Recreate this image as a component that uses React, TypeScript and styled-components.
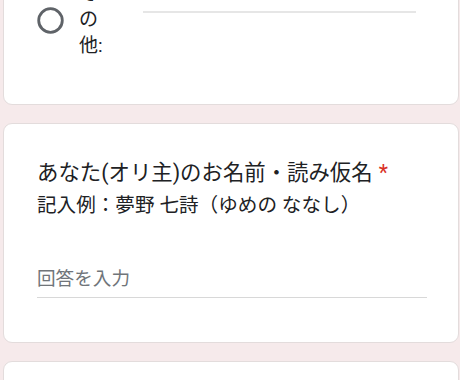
import styled, { createGlobalStyle } from 'styled-components';

const GlobalStyle = createGlobalStyle`
  html, body {
    margin: 0;
    padding: 0;
    background: #f6eaeb;
    overflow: hidden;
  }
  body {
    font-family: Roboto, "Noto Sans CJK JP", sans-serif;
    color: #202124;
  }
`;

const FormPage = styled.main`
  display: flex;
  flex-direction: column;
  gap: 18px;
  padding: 0 1px 0 3px;
  margin-top: -60px;
`;

const Card = styled.section<{ $padTop: number; $padBottom: number; $minHeight?: number }>`
  background: #ffffff;
  border: 1px solid #e3dcdc;
  border-radius: 9px;
  padding: ${(p) => p.$padTop}px 31px ${(p) => p.$padBottom}px 33px;
  min-height: ${(p) => (p.$minHeight ? `${p.$minHeight}px` : 'auto')};
  box-sizing: border-box;
`;

const OptionRow = styled.div`
  display: flex;
  align-items: flex-start;
`;

const RadioBox = styled.div`
  width: 27px;
  height: 27px;
  margin-top: 26px;
  flex-shrink: 0;
`;

const OptionLabel = styled.span`
  width: 27px;
  margin-left: 15px;
  font-size: 19px;
  line-height: 26px;
  color: #202124;
`;

const OtherInput = styled.div`
  flex: 1;
  height: 30px;
  margin: 0 11px 0 37px;
  border-bottom: 2px solid #e6e6e6;
`;

const Question = styled.h2`
  margin: 0;
  font-size: 21.4px;
  font-weight: 400;
  line-height: 30px;
  color: #202124;
`;

const Required = styled.span`
  color: #d93025;
  padding-left: 6px;
`;

const Hint = styled.p`
  margin: 4px 0 0;
  font-size: 19.6px;
  line-height: 28px;
  color: #202124;
`;

const AnswerField = styled.div`
  margin-top: 47px;
  padding-bottom: 6px;
  border-bottom: 1px solid #d8d8d8;
  font-size: 18.6px;
  line-height: 24px;
  color: #70757a;
`;

const Radio = () => (
  <RadioBox>
    <svg width="27" height="27" viewBox="0 0 27 27">
      <circle cx="13.5" cy="13.5" r="11.8" fill="none" stroke="#5f6368" strokeWidth="2.8" />
    </svg>
  </RadioBox>
);

const App = () => {
  return (
    <>
      <GlobalStyle />
      <FormPage>
        <Card $padTop={40} $padBottom={45}>
          <OptionRow>
            <Radio />
            <OptionLabel>その他:</OptionLabel>
            <OtherInput />
          </OptionRow>
        </Card>
        <Card $padTop={34} $padBottom={44}>
          <Question>
            あなた(オリ主)のお名前・読み仮名<Required>*</Required>
          </Question>
          <Hint>記入例：夢野 七詩（ゆめの ななし）</Hint>
          <AnswerField>回答を入力</AnswerField>
        </Card>
        <Card $padTop={30} $padBottom={30} $minHeight={120} />
      </FormPage>
    </>
  );
};

export default App;
